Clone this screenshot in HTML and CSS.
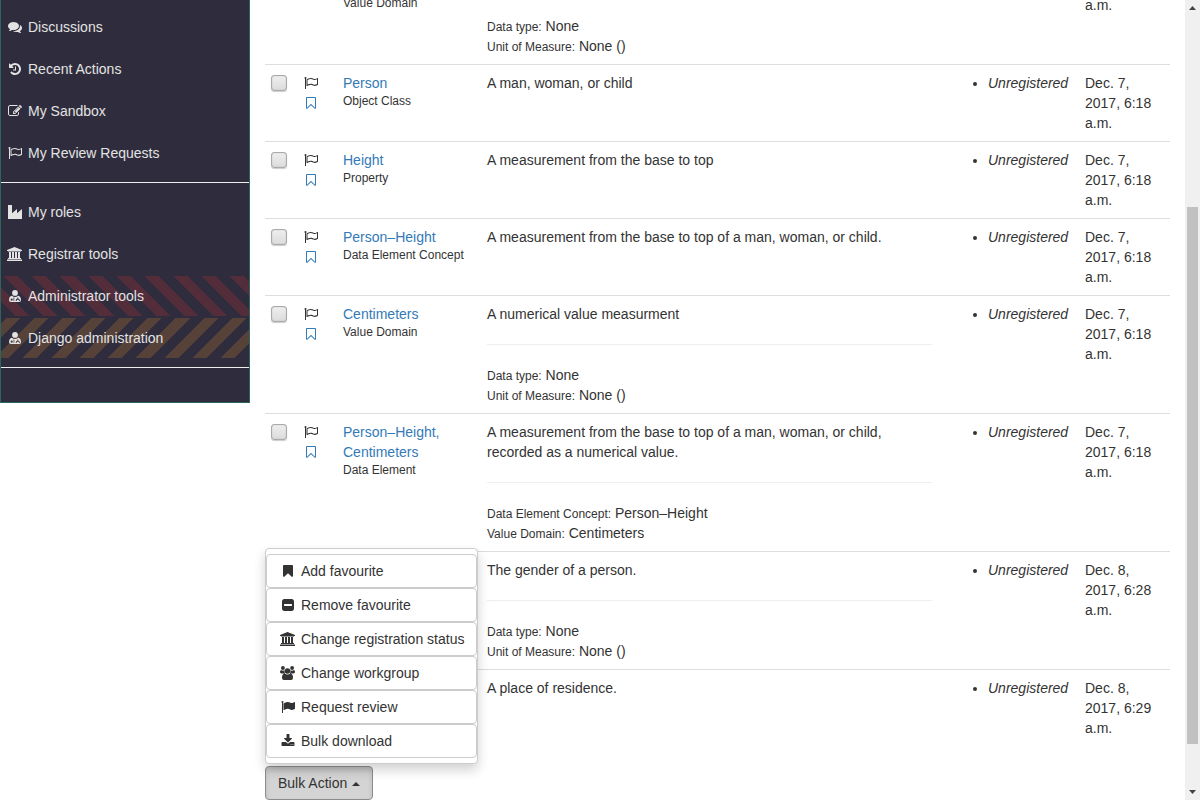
FILE: index.html
```html
<!DOCTYPE html>
<html lang="en">
<head>
<meta charset="utf-8">
<title>Metadata registry</title>
<link rel="stylesheet" href="styles.css">
</head>
<body>
<svg class="sprite" aria-hidden="true">
  <symbol id="comments" viewBox="0 0 1792 1792"><path d="M1408 768q0 139-94 257t-256.500 186.500-353.500 68.500q-86 0-176-16-124 88-278 128-36 9-86 16h-3q-11 0-20.500-8t-11.500-21q-1-3-1-6.500t.5-6.500 2-6l2.500-5 3.500-5.500 4-5 4.500-5 4-4.500q5-6 23-25t26-29.500 22.500-29 25-38.500 20.500-44q-124-72-195-177t-71-224q0-139 94-257t256.500-186.500 353.500-68.500 353.500 68.500 256.500 186.500 94 257zm384 256q0 120-71 224.500t-195 176.500q10 24 20.500 44t25 38.500 22.500 29 26 29.500 23 25q1 1 4 4.500t4.500 5 4 5 3.500 5.500l2.500 5 2 6 .5 6.500-1 6.500q-3 14-13 22t-22 7q-50-7-86-16-154-40-278-128-90 16-176 16-271 0-472-132 58 4 88 4 161 0 309-45t264-129q125-92 192-212t67-254q0-77-23-152 129 71 204 178t75 230z"/></symbol>
  <symbol id="history" viewBox="0 0 1792 1792"><path d="M1664 896q0 156-61 298t-164 245-245 164-298 61q-172 0-327-72.500t-264-204.500q-7-10-6.500-22.500t8.500-20.500l137-138q10-9 25-9 16 2 23 12 73 95 179 147t225 52q104 0 198.500-40.500t163.500-109.500 109.500-163.500 40.500-198.500-40.500-198.500-109.500-163.500-163.500-109.500-198.500-40.500q-98 0-188 35.500t-160 101.500l137 138q31 30 14 69-17 40-59 40h-448q-26 0-45-19t-19-45v-448q0-42 40-59 39-17 69 14l130 129q107-101 244.500-156.500t284.500-55.500q156 0 298 61t245 164 164 245 61 298zm-640-288v448q0 14-9 23t-23 9h-320q-14 0-23-9t-9-23v-64q0-14 9-23t23-9h224v-352q0-14 9-23t23-9h64q14 0 23 9t9 23z"/></symbol>
  <symbol id="edit" viewBox="0 0 1792 1792"><path d="M888 1184l116-116-152-152-116 116v56h96v96h56zm440-720q-16-16-33 1l-350 350q-17 17-1 33t33-1l350-350q17-17 1-33zm80 594v190q0 119-84.500 203.500t-203.500 84.500h-832q-119 0-203.500-84.500t-84.500-203.500v-832q0-119 84.500-203.500t203.500-84.500h832q63 0 117 25 15 7 18 23 3 17-9 29l-49 49q-14 14-32 8-23-6-45-6h-832q-66 0-113 47t-47 113v832q0 66 47 113t113 47h832q66 0 113-47t47-113v-126q0-13 9-22l64-64q15-15 35-7t20 29zm-96-738l288 288-672 672h-288v-288zm444 132l-92 92-288-288 92-92q28-28 68-28t68 28l152 152q28 28 28 68t-28 68z"/></symbol>
  <symbol id="flag-o" viewBox="0 0 1792 1792"><path d="M1664 1036v-616q-169 91-306 91-82 0-145-32-100-49-184-76.500t-178-27.500q-173 0-403 127v599q245-113 433-113 55 0 103.500 7.500t98 26 77 31 82.500 39.500l28 14q44 22 101 22 120 0 293-92zm-1344-780q0 35-17.500 64t-46.500 46v1266q0 14-9 23t-23 9h-64q-14 0-23-9t-9-23v-1266q-29-17-46.500-46t-17.500-64q0-53 37.500-90.500t90.500-37.500 90.500 37.500 37.500 90.500zm1472 64v763q0 39-35 57-10 5-17 9-218 116-369 116-88 0-158-35l-28-14q-64-33-99-48t-91-29-114-14q-102 0-235.500 44t-228.500 102q-15 9-33 9-16 0-32-8-32-19-32-56v-742q0-35 31-55 35-21 78.500-42.500t114-52 152.500-49.500 155-19q112 0 209 31t209 86q38 19 89 19 122 0 310-112 22-12 31-17 31-16 62 2 31 20 31 55z"/></symbol>
  <symbol id="flag" viewBox="0 0 1792 1792"><path d="M320 256q0 72-64 110v1266q0 13-9.500 22.500t-22.500 9.500h-64q-13 0-22.500-9.500t-9.500-22.500v-1266q-64-38-64-110 0-53 37.500-90.500t90.500-37.500 90.500 37.500 37.500 90.500zm1472 64v763q0 25-12.500 38.500t-39.500 27.500q-215 116-369 116-61 0-123.500-22t-108.500-48-115.500-48-142.500-22q-192 0-464 146-17 9-33 9-26 0-45-19t-19-45v-742q0-32 31-55 21-14 79-43 236-120 421-120 107 0 200 29t219 88q38 19 88 19 54 0 117.500-21t110-47 88-47 54.500-21q26 0 45 19t19 45z"/></symbol>
  <symbol id="bookmark" viewBox="0 0 1792 1792"><path d="M1420 128q23 0 44 9 33 13 52.500 41t19.500 62v1289q0 34-19.500 62t-52.500 41q-19 8-44 8-48 0-83-32l-441-424-441 424q-36 33-83 33-23 0-44-9-33-13-52.500-41t-19.500-62v-1289q0-34 19.500-62t52.500-41q21-9 44-9h1048z"/></symbol>
  <symbol id="bookmark-o" viewBox="0 0 1792 1792"><path d="M1408 256h-1024v1242l423-406 89-85 89 85 423 406v-1242zm12-128q23 0 44 9 33 13 52.500 41t19.500 62v1289q0 34-19.500 62t-52.500 41q-19 8-44 8-48 0-83-32l-441-424-441 424q-36 33-83 33-23 0-44-9-33-13-52.500-41t-19.500-62v-1289q0-34 19.500-62t52.500-41q21-9 44-9h1048z"/></symbol>
  <symbol id="minus-square" viewBox="0 0 1792 1792"><path d="M1408 960v-128q0-26-19-45t-45-19h-896q-26 0-45 19t-19 45v128q0 26 19 45t45 19h896q26 0 45-19t19-45zm256-544v960q0 119-84.500 203.500t-203.500 84.500h-960q-119 0-203.500-84.500t-84.500-203.500v-960q0-119 84.500-203.500t203.500-84.500h960q119 0 203.500 84.500t84.500 203.500z"/></symbol>
  <symbol id="download" viewBox="0 0 1792 1792"><path d="M1344 1344q0-26-19-45t-45-19-45 19-19 45 19 45 45 19 45-19 19-45zm256 0q0-26-19-45t-45-19-45 19-19 45 19 45 45 19 45-19 19-45zm128-224v320q0 40-28 68t-68 28h-1472q-40 0-68-28t-28-68v-320q0-40 28-68t68-28h465l135 136q58 56 136 56t136-56l136-136h464q40 0 68 28t28 68zm-325-569q17 41-14 70l-448 448q-18 19-45 19t-45-19l-448-448q-31-29-14-70 17-39 59-39h256v-448q0-26 19-45t45-19h256q26 0 45 19t19 45v448h256q42 0 59 39z"/></symbol>
  <symbol id="industry" viewBox="0 0 14 14"><path d="M0 0h4v8.300l5-4.300v4.300L14 4v10H0z"/></symbol>
  <symbol id="university" viewBox="-1 0 18 14"><path d="M7.500 0 15 3v1h-1v.6H1V4H0V3zM2 5h2v6h1V5h2v6h1V5h2v6h1V5h2v6h1v1H1v-1h1zM0 12.600h15V14H0z"/></symbol>
  <symbol id="user-md" viewBox="0 0 14 14"><path fill-rule="evenodd" d="M7 1a2.900 2.900 0 1 1 0 5.800A2.900 2.900 0 0 1 7 1zM3.800 6.800Q1 7.300 1 11.300 1 13 2.900 13h8.200q1.900 0 1.900-1.700 0-4-2.800-4.500Q7 9.200 3.800 6.800zM3.700 9.600a1.100 1.100 0 1 1 0 2.200 1.100 1.100 0 0 1 0-2.200zM9.300 8.400h.9v1.200q1.700.3 1.700 2.400h-.9q0-1.600-1.200-1.600T8.600 12h-.9q0-2.100 1.600-2.400zM5.500 8.600h.8v3.200h-.8z"/></symbol>
  <symbol id="group" viewBox="-1 0 18 14"><circle cx="2.900" cy="2" r="1.900"/><circle cx="12.100" cy="2" r="1.900"/><circle cx="7.500" cy="5" r="2.800"/><path d="M1 4.100q2 1.200 3.600.2-.5 2 .6 3.100H1.400Q0 7.300 0 6.100 0 4.500 1 4.100zM14 4.100q-2 1.200-3.600.2.500 2-.6 3.100h3.800q1.400-.1 1.400-1.300 0-1.600-1-2zM4.600 7.500q2.900 2.100 5.800 0 2.600.3 2.600 4.300 0 2.200-1.900 2.200H3.900Q2 14 2 11.800q0-4 2.600-4.300z"/></symbol>
</svg>
<div class="page">
  <nav class="sidebar" aria-label="Dashboard">
    <a class="side-link" href="#"><svg class="icon"><use href="#comments"/></svg>Discussions</a>
    <a class="side-link" href="#"><svg class="icon"><use href="#history"/></svg>Recent Actions</a>
    <a class="side-link" href="#"><svg class="icon"><use href="#edit"/></svg>My Sandbox</a>
    <a class="side-link" href="#"><svg class="icon"><use href="#flag-o"/></svg>My Review Requests</a>
    <hr class="side-rule">
    <a class="side-link" href="#"><svg class="icon"><use href="#industry"/></svg>My roles</a>
    <a class="side-link" href="#"><svg class="icon"><use href="#university"/></svg>Registrar tools</a>
    <a class="side-link admin" href="#"><svg class="icon"><use href="#user-md"/></svg>Administrator tools</a>
    <a class="side-link django" href="#"><svg class="icon"><use href="#user-md"/></svg>Django administration</a>
    <hr class="side-rule">
  </nav>

  <main class="content">
    <table class="items">
      <colgroup><col class="c-check"><col class="c-flags"><col class="c-name"><col><col class="c-status"><col class="c-date"></colgroup>
      <tbody>
        <tr class="continued">
          <td></td><td></td>
          <td><small class="kind">Value Domain</small></td>
          <td><hr class="rule"><div><small>Data type:</small> None</div><div><small>Unit of Measure:</small> None ()</div></td>
          <td></td>
          <td>a.m.</td>
        </tr>
        <tr>
          <td class="check"><input type="checkbox" aria-label="Select Person"></td>
          <td><span class="flags"><svg class="icon"><use href="#flag-o"/></svg><a href="#" aria-label="Favourite Person"><svg class="icon"><use href="#bookmark-o"/></svg></a></span></td>
          <td><a href="#">Person</a><small class="kind">Object Class</small></td>
          <td>A man, woman, or child</td>
          <td><ul><li>Unregistered</li></ul></td>
          <td>Dec. 7, 2017, 6:18 a.m.</td>
        </tr>
        <tr>
          <td class="check"><input type="checkbox" aria-label="Select Height"></td>
          <td><span class="flags"><svg class="icon"><use href="#flag-o"/></svg><a href="#" aria-label="Favourite Height"><svg class="icon"><use href="#bookmark-o"/></svg></a></span></td>
          <td><a href="#">Height</a><small class="kind">Property</small></td>
          <td>A measurement from the base to top</td>
          <td><ul><li>Unregistered</li></ul></td>
          <td>Dec. 7, 2017, 6:18 a.m.</td>
        </tr>
        <tr>
          <td class="check"><input type="checkbox" aria-label="Select Person–Height"></td>
          <td><span class="flags"><svg class="icon"><use href="#flag-o"/></svg><a href="#" aria-label="Favourite Person–Height"><svg class="icon"><use href="#bookmark-o"/></svg></a></span></td>
          <td><a href="#">Person–Height</a><small class="kind">Data Element Concept</small></td>
          <td>A measurement from the base to top of a man, woman, or child.</td>
          <td><ul><li>Unregistered</li></ul></td>
          <td>Dec. 7, 2017, 6:18 a.m.</td>
        </tr>
        <tr>
          <td class="check"><input type="checkbox" aria-label="Select Centimeters"></td>
          <td><span class="flags"><svg class="icon"><use href="#flag-o"/></svg><a href="#" aria-label="Favourite Centimeters"><svg class="icon"><use href="#bookmark-o"/></svg></a></span></td>
          <td><a href="#">Centimeters</a><small class="kind">Value Domain</small></td>
          <td>A numerical value measurment<hr class="rule"><div><small>Data type:</small> None</div><div><small>Unit of Measure:</small> None ()</div></td>
          <td><ul><li>Unregistered</li></ul></td>
          <td>Dec. 7, 2017, 6:18 a.m.</td>
        </tr>
        <tr>
          <td class="check"><input type="checkbox" aria-label="Select Person–Height, Centimeters"></td>
          <td><span class="flags"><svg class="icon"><use href="#flag-o"/></svg><a href="#" aria-label="Favourite Person–Height, Centimeters"><svg class="icon"><use href="#bookmark-o"/></svg></a></span></td>
          <td><a href="#">Person–Height, Centimeters</a><small class="kind">Data Element</small></td>
          <td>A measurement from the base to top of a man, woman, or child, recorded as a numerical value.<hr class="rule"><div><small>Data Element Concept:</small> Person–Height</div><div><small>Value Domain:</small> Centimeters</div></td>
          <td><ul><li>Unregistered</li></ul></td>
          <td>Dec. 7, 2017, 6:18 a.m.</td>
        </tr>
        <tr>
          <td></td><td></td><td></td>
          <td>The gender of a person.<hr class="rule"><div><small>Data type:</small> None</div><div><small>Unit of Measure:</small> None ()</div></td>
          <td><ul><li>Unregistered</li></ul></td>
          <td>Dec. 8, 2017, 6:28 a.m.</td>
        </tr>
        <tr>
          <td></td><td></td><td></td>
          <td>A place of residence.</td>
          <td><ul><li>Unregistered</li></ul></td>
          <td>Dec. 8, 2017, 6:29 a.m.</td>
        </tr>
      </tbody>
    </table>

    <div class="dropup">
      <div class="menu">
        <button type="button" class="menu-item"><svg class="icon"><use href="#bookmark"/></svg>Add favourite</button>
        <button type="button" class="menu-item"><svg class="icon"><use href="#minus-square"/></svg>Remove favourite</button>
        <button type="button" class="menu-item"><svg class="icon"><use href="#university"/></svg>Change registration status</button>
        <button type="button" class="menu-item"><svg class="icon"><use href="#group"/></svg>Change workgroup</button>
        <button type="button" class="menu-item"><svg class="icon"><use href="#flag"/></svg>Request review</button>
        <button type="button" class="menu-item"><svg class="icon"><use href="#download"/></svg>Bulk download</button>
      </div>
      <button type="button" class="toggle" aria-expanded="true">Bulk Action <span class="caret"></span></button>
    </div>
  </main>

  <div class="scrollbar" aria-hidden="true">
    <svg class="arrow" viewBox="0 0 15 15"><path d="M4 10h7L7.500 6z"/></svg>
    <div class="track"><div class="thumb"></div></div>
    <svg class="arrow" viewBox="0 0 15 15"><path d="M4 5h7L7.500 9z"/></svg>
  </div>
</div>
</body>
</html>
```
FILE: styles.css
```css
* { box-sizing: border-box; }

body {
  margin: 0;
  background: #fff;
  color: #333;
  font: 14px/20px "Liberation Sans", Arial, sans-serif;
}

a { color: #337ab7; text-decoration: none; }

small { font-size: 12px; line-height: 12px; }

.sprite { display: none; }

.icon {
  flex: none;
  width: 18px;
  height: 14px;
  fill: currentColor;
}

.page {
  display: flex;
  height: 100vh;
  overflow: hidden;
}

/* Sidebar */
.sidebar {
  display: flex;
  flex-direction: column;
  flex: none;
  align-self: flex-start;
  gap: 2px;
  width: 250px;
  padding: 7px 0 27px;
  border: solid #2c655f;
  border-width: 0 1px 1px;
  background: #2f2d3d;
}

.side-link {
  display: flex;
  align-items: center;
  gap: 4px;
  padding: 10px 5px;
  color: #e3e3e3;
}

.side-rule {
  width: 100%;
  margin: 7px 0;
  border: 0;
  border-top: 1px solid #eee;
}

.admin { background: repeating-linear-gradient(45deg, transparent 0 10px, #542d3b 10px 20px); }
.django { background: repeating-linear-gradient(-45deg, transparent 0 10px, #564239 10px 20px); }

/* The list is scrolled to its end, so it is anchored to the bottom edge. */
.content {
  display: flex;
  flex-direction: column;
  justify-content: flex-end;
  flex: 1;
  gap: 20px;
  min-width: 0;
  padding: 0 15px;
}

.items {
  flex: none;
  width: 100%;
  table-layout: fixed;
  border-collapse: collapse;
}

.c-check { width: 31px; }
.c-flags { width: 39px; }
.c-name { width: 144px; }
.c-status { width: 137px; }
.c-date { width: 93px; }

.items td {
  padding: 8px;
  border-top: 1px solid #ddd;
  vertical-align: top;
}

.items .check { padding: 10px 6px; }

.check input {
  display: block;
  appearance: none;
  width: 16px;
  height: 16px;
  margin: 0;
  border: 1px solid #aaa;
  border-radius: 3px;
  background: linear-gradient(#eee, #dcdcdc);
  box-shadow: inset 0 0 1px #999, 0 1px 1px #ccc;
}

.flags {
  display: flex;
  flex-direction: column;
  align-items: center;
  gap: 6px;
  width: 14px;
  padding-top: 3px;
}

.flags a { display: flex; }

.kind {
  display: block;
  line-height: 17px;
}

.rule {
  margin: 20px 0;
  border: 0;
  border-top: 1px solid #eee;
}

.continued .rule { margin-top: 0; }

.items ul {
  margin: 0;
  padding-left: 40px;
  font-style: italic;
}

/* Bulk actions */
.dropup {
  position: relative;
  flex: none;
  align-self: flex-start;
}

.menu {
  position: absolute;
  bottom: 100%;
  left: 0;
  display: flex;
  flex-direction: column;
  margin-bottom: 2px;
  padding: 5px 0;
  border: 1px solid #ccc;
  border-radius: 4px;
  background: #fff;
  box-shadow: 0 6px 12px rgba(0, 0, 0, .18);
}

.menu-item,
.toggle {
  display: flex;
  align-items: center;
  gap: 4px;
  padding: 6px 12px;
  border: 1px solid #ccc;
  border-radius: 4px;
  background: #fff;
  color: #333;
  font: inherit;
  white-space: nowrap;
}

.toggle {
  gap: 5px;
  border-color: #8c8c8c;
  background: #d4d4d4;
  box-shadow: inset 0 3px 5px rgba(0, 0, 0, .125);
}

.caret {
  margin-top: 2px;
  border: 4px solid transparent;
  border-top: 0;
  border-bottom-color: #333;
}

/* Scrollbar */
.scrollbar {
  display: flex;
  flex-direction: column;
  flex: none;
  width: 15px;
  background: #f0f0f0;
}

.arrow { flex: none; height: 15px; fill: #444; }

.track {
  display: flex;
  flex-direction: column;
  justify-content: flex-end;
  flex: 1;
  padding: 0 2px 41px;
}

.thumb { height: 73.7%; background: #c1c1c1; }
```
